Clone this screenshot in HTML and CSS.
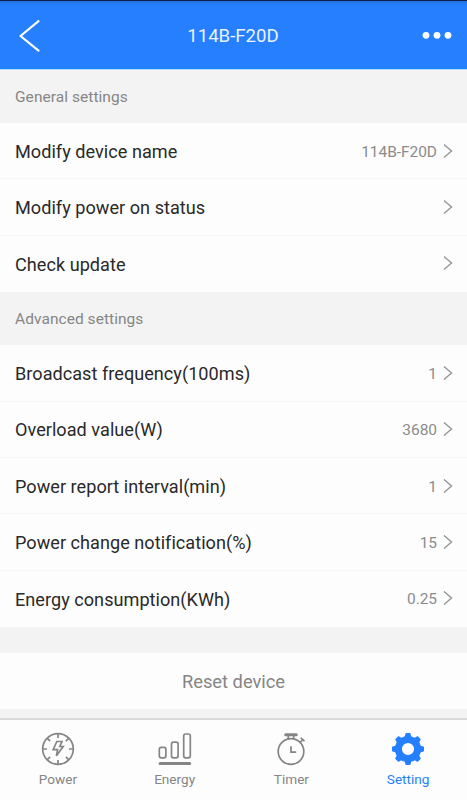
FILE: index.html
```html
<!DOCTYPE html>
<html lang="en">
<head>
<meta charset="utf-8">
<title>114B-F20D</title>
<link rel="stylesheet" href="styles.css">
</head>
<body>
<header class="bar">
  <svg class="back" width="24" height="36" viewBox="0 0 24 36"><path d="M20.5 3.2 2.5 18 20.5 32.6"/></svg>
  <h1 class="title">114B-F20D</h1>
  <svg class="more" width="32" height="10" viewBox="0 0 32 10"><circle cx="4" cy="4.3" r="3.4"/><circle cx="15" cy="4.3" r="3.4"/><circle cx="26" cy="4.3" r="3.4"/></svg>
</header>
<main>
  <h2 class="section">General settings</h2>
  <ul class="list">
    <li class="row"><span class="label">Modify device name</span><span class="value">114B-F20D</span><svg class="chev" viewBox="0 0 10 16"><path d="M1 1.5 8.5 8 1 14.5"/></svg></li>
    <li class="row"><span class="label">Modify power on status</span><svg class="chev" viewBox="0 0 10 16"><path d="M1 1.5 8.5 8 1 14.5"/></svg></li>
    <li class="row"><span class="label">Check update</span><svg class="chev" viewBox="0 0 10 16"><path d="M1 1.5 8.5 8 1 14.5"/></svg></li>
  </ul>
  <h2 class="section">Advanced settings</h2>
  <ul class="list">
    <li class="row"><span class="label">Broadcast frequency(100ms)</span><span class="value">1</span><svg class="chev" viewBox="0 0 10 16"><path d="M1 1.5 8.5 8 1 14.5"/></svg></li>
    <li class="row"><span class="label">Overload value(W)</span><span class="value">3680</span><svg class="chev" viewBox="0 0 10 16"><path d="M1 1.5 8.5 8 1 14.5"/></svg></li>
    <li class="row"><span class="label">Power report interval(min)</span><span class="value">1</span><svg class="chev" viewBox="0 0 10 16"><path d="M1 1.5 8.5 8 1 14.5"/></svg></li>
    <li class="row"><span class="label">Power change notification(%)</span><span class="value">15</span><svg class="chev" viewBox="0 0 10 16"><path d="M1 1.5 8.5 8 1 14.5"/></svg></li>
    <li class="row"><span class="label">Energy consumption(KWh)</span><span class="value">0.25</span><svg class="chev" viewBox="0 0 10 16"><path d="M1 1.5 8.5 8 1 14.5"/></svg></li>
  </ul>
  <button class="reset">Reset device</button>
</main>
<nav class="tabs">
  <a class="tab">
    <svg class="icon" viewBox="0 0 36 36"><circle cx="18" cy="18" r="15.3"/><path d="M18 3v4M18 29v4M3 18h4M29 18h4M7.4 7.4l2.7 2.7M25.9 25.9l2.7 2.7M7.4 28.6l2.7-2.7M25.9 10.1l2.7-2.7"/><path d="M16.8 10.5h5.2l-2.2 5h3.4l-6.8 9.3 1.2-6.2h-4.4z"/></svg>
    <span>Power</span>
  </a>
  <a class="tab">
    <svg class="icon" viewBox="0 0 36 36"><rect x="2.3" y="16.3" width="6.6" height="10.5" rx="2"/><rect x="14.5" y="11.2" width="6.6" height="15.6" rx="2"/><rect x="26.7" y="3" width="6.6" height="23.8" rx="2"/><path class="base" d="M3.1 32.5h29.6"/></svg>
    <span>Energy</span>
  </a>
  <a class="tab">
    <svg class="icon" viewBox="0 0 36 36"><circle cx="18" cy="20.5" r="12.8"/><path class="base" d="M12.7 3.8h10.6"/><path d="M15.3 5v3.2M20.7 5v3.2M27.8 6.8l3.7 3.4M29.8 8.5l-2.4 2.8M18 15.2v6h5.2"/></svg>
    <span>Timer</span>
  </a>
  <a class="tab active">
    <svg class="icon gear" viewBox="0 0 36 36">
      <defs><path id="tooth" class="tooth" d="M14.9 7.5 16.2 2.7h3.6l1.3 4.8z"/></defs>
      <circle cx="18" cy="18" r="9.6"/>
      <use href="#tooth"/><use href="#tooth" transform="rotate(45 18 18)"/><use href="#tooth" transform="rotate(90 18 18)"/><use href="#tooth" transform="rotate(135 18 18)"/><use href="#tooth" transform="rotate(180 18 18)"/><use href="#tooth" transform="rotate(225 18 18)"/><use href="#tooth" transform="rotate(270 18 18)"/><use href="#tooth" transform="rotate(315 18 18)"/>
    </svg>
    <span>Setting</span>
  </a>
</nav>
</body>
</html>
```
FILE: styles.css
```css
* { box-sizing: border-box; }
body {
  margin: 0;
  height: 800px;
  display: flex;
  flex-direction: column;
  overflow: hidden;
  background: #f3f3f3;
  color: #292929;
  font-family: Roboto, "Liberation Sans", sans-serif;
}
.bar {
  height: 70px;
  flex: none;
  display: grid;
  grid-template-columns: 60px 1fr 60px;
  align-items: center;
  padding: 1px 13px 0 18px;
  background: linear-gradient(#0c1f48 0 1px, #2672e0 1px, #257fff 5px, #257fff 68px, #1686ff 68px 69px, #b8dcfb 69px);
}
.back { fill: none; stroke: #fff; stroke-width: 2.2; stroke-linecap: round; stroke-linejoin: round; }
.title { margin: 0; padding-right: 6px; text-align: center; font-size: 18.6px; font-weight: 400; line-height: 24px; color: #eaf3ff; }
.more { justify-self: end; fill: #fff; }
.section { margin: 0; height: 53px; padding: 1px 15px 0; font-size: 15.5px; font-weight: 400; line-height: 53px; letter-spacing: 0.05px; color: #868686; }
.list { margin: 0; padding: 0; list-style: none; background: #fdfdfd; }
.row {
  height: 56.4px;
  display: flex;
  align-items: center;
  padding: 0 14px 0 15px;
  border-bottom: 1px solid #f6f6f6;
}
.row:last-child { border-bottom-color: transparent; }
.label { flex: 1; padding-top: 2.4px; font-size: 18.1px; line-height: 24px; letter-spacing: 0.03px; }
.value { padding-top: 2px; margin-right: 6px; font-size: 15.5px; line-height: 22px; letter-spacing: -0.05px; color: #8b8b8b; }
.chev { width: 10px; height: 16px; fill: none; stroke: #959595; stroke-width: 1.4; }
.reset {
  display: block;
  width: 100%;
  height: 56px;
  margin: 26px 0 0;
  padding: 2px 0 0;
  border: 0;
  background: #fdfdfd;
  color: #858585;
  font: 400 18.3px/24px Roboto, "Liberation Sans", sans-serif;
}
.tabs {
  height: 82px;
  flex: none;
  margin-top: auto;
  display: grid;
  grid-template-columns: repeat(4, 1fr);
  border-top: 2px solid #dadada;
  background: #fdfdfd;
}
.tab { display: flex; flex-direction: column; align-items: center; padding: 11px 1px 0 0; font-size: 13.6px; line-height: 18px; color: #858585; }
.tab span { margin-top: 3px; }
.icon { width: 36px; height: 36px; fill: none; stroke: #858585; stroke-width: 1.7; }
.base { stroke-width: 3; stroke-linecap: round; }
.active { color: #257fff; }
.gear { stroke: #257fff; stroke-width: 7; }
.tooth { fill: #257fff; stroke-width: 1.4; stroke-linejoin: round; }
```
